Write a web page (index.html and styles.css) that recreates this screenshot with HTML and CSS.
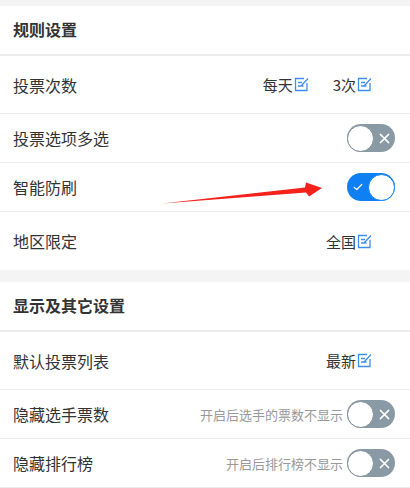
FILE: index.html
```html
<!DOCTYPE html>
<html lang="zh-CN">
<head>
<meta charset="utf-8">
<link rel="stylesheet" href="styles.css">
</head>
<body>
<div class="page">
  <section class="group">
    <div class="group-head">规则设置</div>
    <div class="row row-tall">
      <span class="label">投票次数</span>
      <div class="values">
        <span class="val">每天<svg class="edit" viewBox="0 0 15 15"><path d="M10 1.5H1.5V13.5H13V6M4 5.5H8M4 9H9.5M7.5 8.5L14 1.5"/></svg></span>
        <span class="val">3次<svg class="edit" viewBox="0 0 15 15"><path d="M10 1.5H1.5V13.5H13V6M4 5.5H8M4 9H9.5M7.5 8.5L14 1.5"/></svg></span>
      </div>
    </div>
    <div class="row">
      <span class="label">投票选项多选</span>
      <span class="switch off"><span class="knob"></span><svg class="mark" viewBox="0 0 12 12"><path d="M1.5 1.5L10.5 10.5M10.5 1.5L1.5 10.5"/></svg></span>
    </div>
    <div class="row row-arrow">
      <span class="label">智能防刷</span>
      <span class="switch on"><svg class="mark check" viewBox="0 0 12 12"><path d="M1.5 6.5L4.5 9L10.5 3"/></svg><span class="knob"></span></span>
      <svg class="arrow" viewBox="0 0 410 49" width="410" height="49"><polygon points="162,40.5 306,29.5 309,33.5 322,25 306,19.5 305,24.5"/></svg>
    </div>
    <div class="row row-tall last">
      <span class="label">地区限定</span>
      <div class="values">
        <span class="val">全国<svg class="edit" viewBox="0 0 15 15"><path d="M10 1.5H1.5V13.5H13V6M4 5.5H8M4 9H9.5M7.5 8.5L14 1.5"/></svg></span>
      </div>
    </div>
  </section>
  <section class="group">
    <div class="group-head">显示及其它设置</div>
    <div class="row row-tall">
      <span class="label">默认投票列表</span>
      <div class="values">
        <span class="val">最新<svg class="edit" viewBox="0 0 15 15"><path d="M10 1.5H1.5V13.5H13V6M4 5.5H8M4 9H9.5M7.5 8.5L14 1.5"/></svg></span>
      </div>
    </div>
    <div class="row">
      <span class="label">隐藏选手票数</span>
      <div class="right">
        <span class="hint">开启后选手的票数不显示</span>
        <span class="switch off"><span class="knob"></span><svg class="mark" viewBox="0 0 12 12"><path d="M1.5 1.5L10.5 10.5M10.5 1.5L1.5 10.5"/></svg></span>
      </div>
    </div>
    <div class="row">
      <span class="label">隐藏排行榜</span>
      <div class="right">
        <span class="hint">开启后排行榜不显示</span>
        <span class="switch off"><span class="knob"></span><svg class="mark" viewBox="0 0 12 12"><path d="M1.5 1.5L10.5 10.5M10.5 1.5L1.5 10.5"/></svg></span>
      </div>
    </div>
  </section>
</div>
</body>
</html>
```

FILE: styles.css
```css
* { box-sizing: border-box; }
html, body { margin: 0; padding: 0; }
body {
  background: #f4f4f4;
  font-family: "Microsoft YaHei", "Noto Sans CJK SC", "Noto Sans", sans-serif;
  color: #333;
}
.page {
  padding-top: 6px;
  display: flex;
  flex-direction: column;
  gap: 12px;
}
.group {
  background: #fff;
}
.group-head {
  height: 50px;
  padding: 0 13px 2px;
  display: flex;
  align-items: center;
  font-size: 16px;
  font-weight: bold;
  border-bottom: 2px solid #ececec;
  line-height: 1;
}
.row {
  position: relative;
  height: 49px;
  padding: 0 15px 0 13px;
  display: flex;
  align-items: center;
  justify-content: space-between;
  border-bottom: 1px solid #ececec;
}
.row-tall { height: 58px; }
.row.last { border-bottom: none; }
.label {
  font-size: 16px;
  line-height: 1;
}
.values {
  display: flex;
  gap: 24px;
  margin-right: 23px;
}
.val {
  display: flex;
  align-items: center;
  font-size: 15px;
  line-height: 1;
  color: #333;
}
.edit {
  width: 15px;
  height: 15px;
  margin-left: 1px;
  fill: none;
  stroke: #3d8ef2;
  stroke-width: 1.3;
}
.right {
  display: flex;
  align-items: center;
  gap: 4px;
}
.hint {
  font-size: 13px;
  color: #999;
  line-height: 1;
}
.switch {
  width: 48px;
  height: 28px;
  border-radius: 14px;
  display: flex;
  align-items: center;
  padding: 0 1px;
}
.switch.off {
  background: #8a9aa4;
}
.switch.on {
  background: #0f80f4;
}
.knob {
  width: 27px;
  height: 27px;
  border-radius: 50%;
  background: #fff;
  flex: none;
}
.switch.off .knob { border: 1px solid #7e8d97; margin-left: -1px; }
.switch.on .knob { border: 1px solid #0f80f4; margin-right: -1px; }
.mark {
  flex: none;
  width: 11px;
  height: 11px;
  margin: 0 auto;
  fill: none;
  stroke: #fff;
  stroke-width: 1.6;
  stroke-linecap: round;
}
.mark.check {
  width: 10px;
  height: 10px;
  stroke-width: 1.5;
  stroke-linejoin: round;
}
.arrow {
  position: absolute;
  left: 0;
  top: 0;
  overflow: visible;
  pointer-events: none;
}
.arrow polygon { fill: #f5211b; }
```
